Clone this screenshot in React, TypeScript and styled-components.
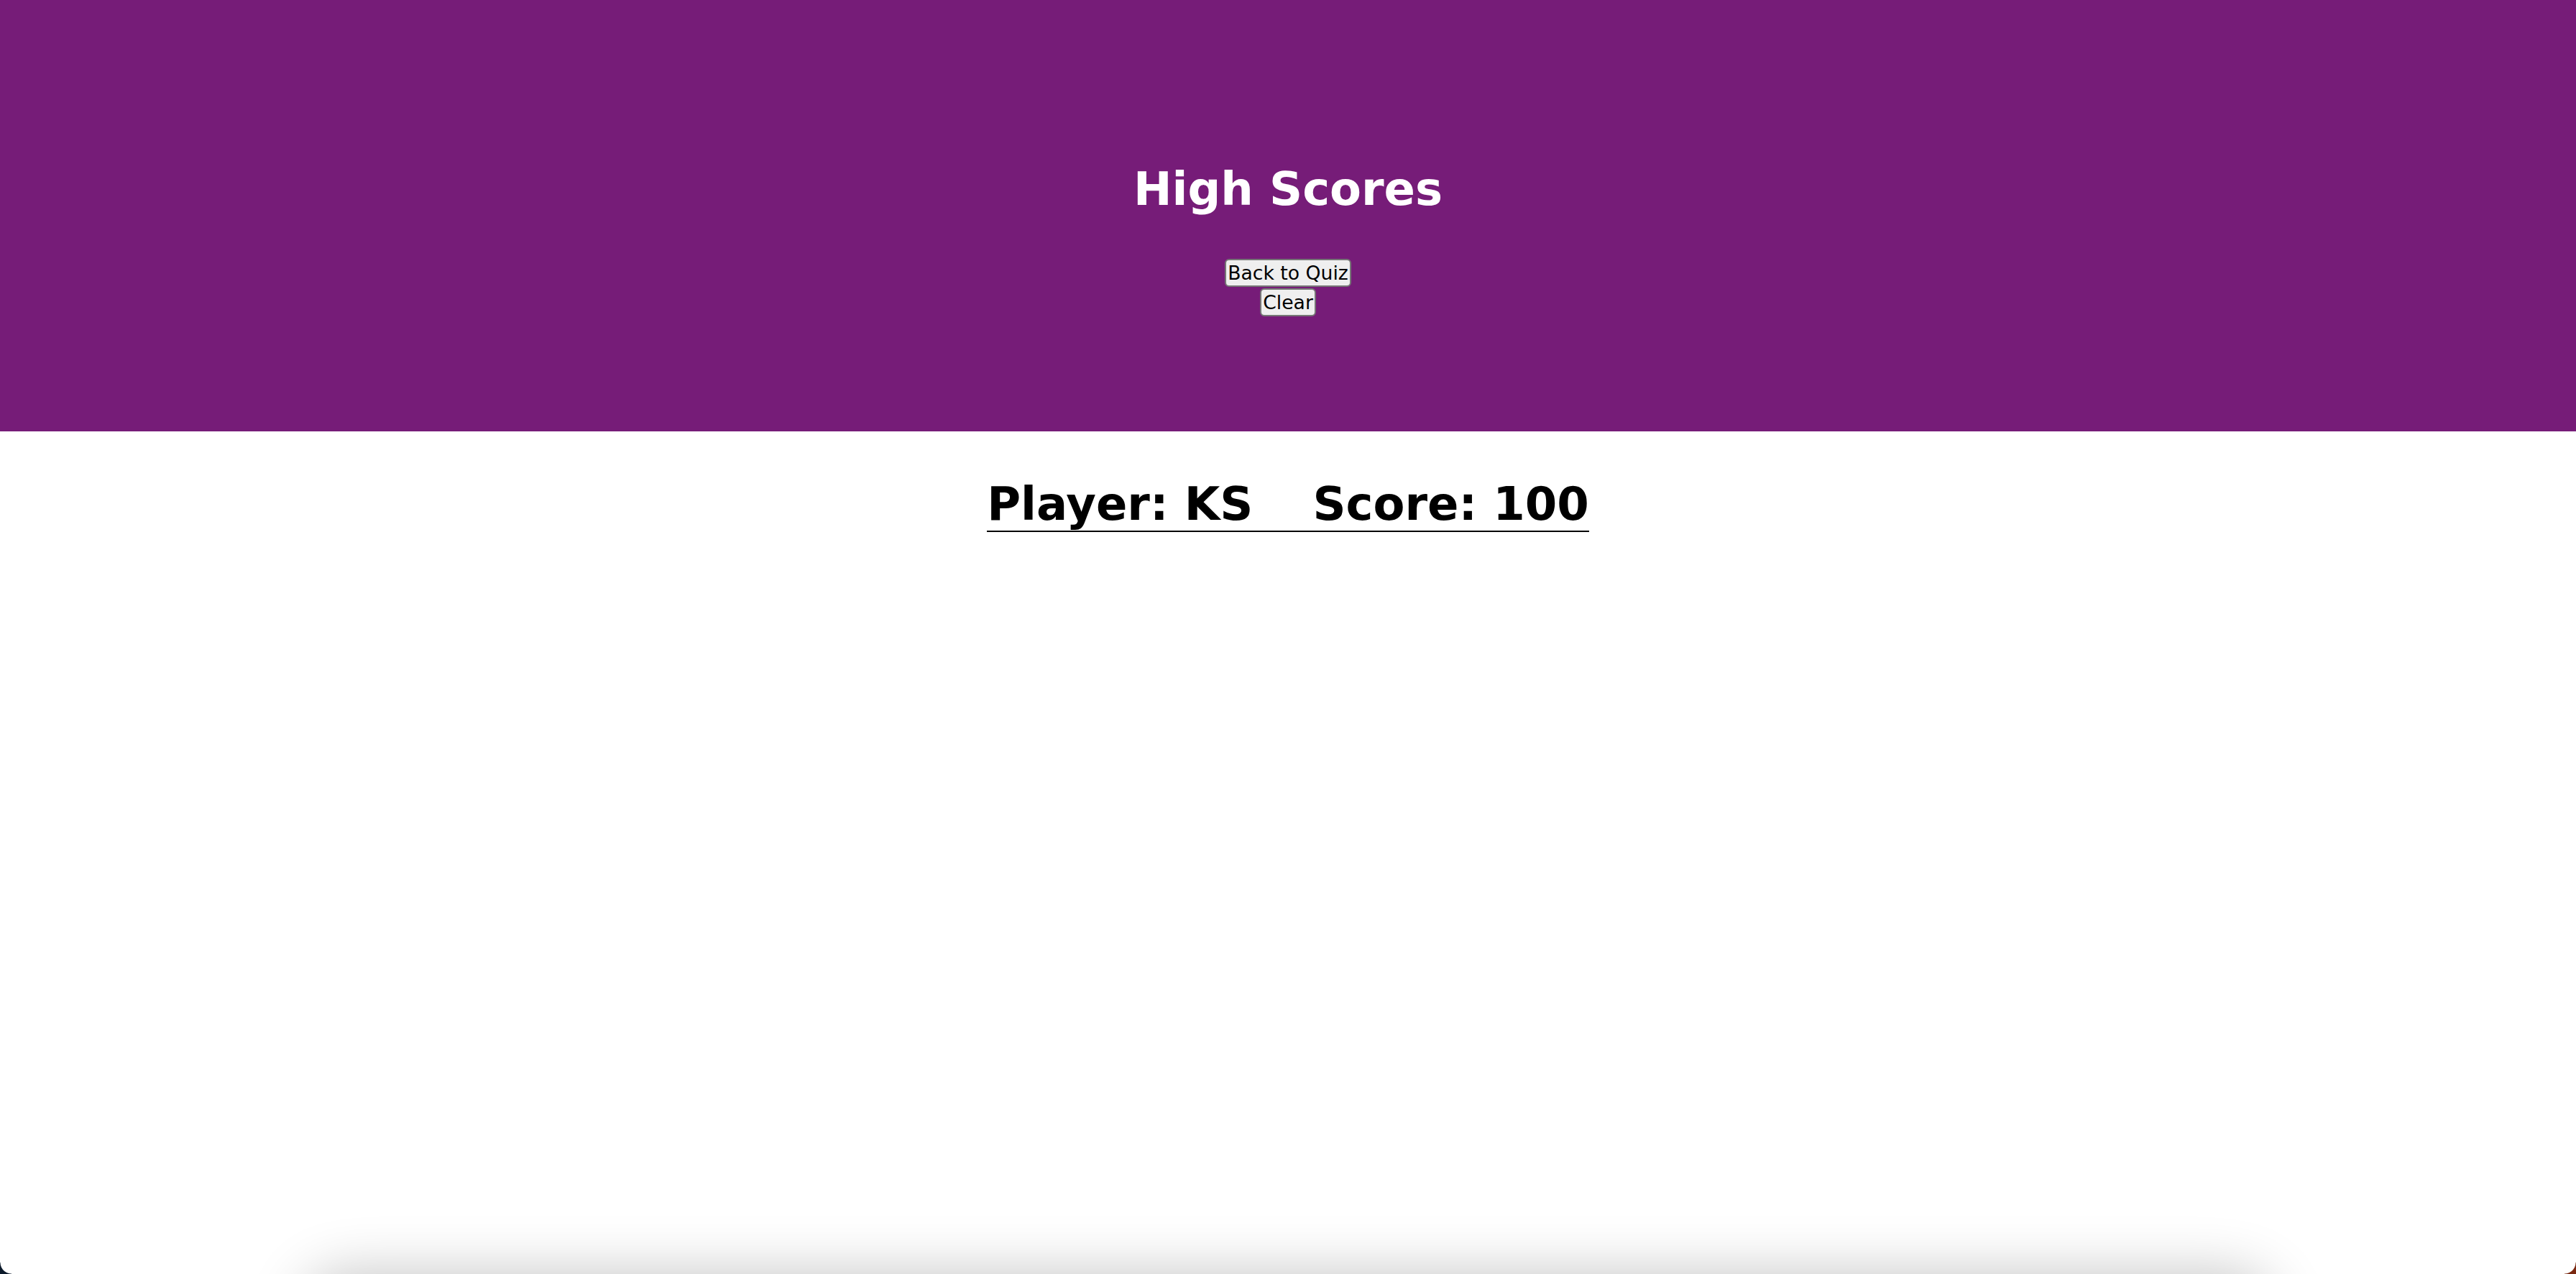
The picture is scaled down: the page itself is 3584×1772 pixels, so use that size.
import React from "react";
import styled, { createGlobalStyle } from "styled-components";

const GlobalStyle = createGlobalStyle`
  html, body {
    margin: 0;
    padding: 0;
    background: #ffffff;
    font-family: "DejaVu Sans", Verdana, sans-serif;
  }
`;

const scores = [{ player: "KS", score: 100 }];

const App = () => {
  return (
    <>
      <GlobalStyle />
      <Page>
        <Header>
          <Title>High Scores</Title>
          <Actions>
            <Button>Back to Quiz</Button>
            <Button>Clear</Button>
          </Actions>
        </Header>
        <Main>
          {scores.map((s) => (
            <ScoreRow key={s.player}>
              <ScoreLine>
                <span>Player: {s.player}</span>
                <ScoreValue>Score: {s.score}</ScoreValue>
              </ScoreLine>
            </ScoreRow>
          ))}
        </Main>
        <Shelf />
        <Corner $side="left" />
        <Corner $side="right" />
      </Page>
    </>
  );
};

export default App;

const Page = styled.div`
  position: relative;
  height: 100vh;
  overflow: hidden;
  display: flex;
  flex-direction: column;
`;

const Header = styled.header`
  flex: none;
  background: #761c78;
  height: 600px;
  box-sizing: border-box;
  padding-top: 226px;
  display: flex;
  flex-direction: column;
  align-items: center;
`;

const Title = styled.h1`
  margin: 0;
  color: #ffffff;
  font-size: 64px;
  font-weight: 700;
  line-height: 74px;
`;

const Actions = styled.div`
  margin-top: 60px;
  display: flex;
  flex-direction: column;
  align-items: center;
  gap: 2px;
`;

const Button = styled.button`
  font-family: "DejaVu Sans", Verdana, sans-serif;
  font-size: 26.67px;
  line-height: normal;
  color: #000000;
  background: #efefef;
  border: 2px solid #767676;
  border-radius: 6px;
  padding: 2px 2px;
  cursor: pointer;
`;

const Main = styled.main`
  flex: 1;
`;

const ScoreRow = styled.div`
  margin-top: 64px;
  text-align: center;
`;

const ScoreLine = styled.h2`
  display: inline-block;
  margin: 0;
  font-size: 64px;
  font-weight: 700;
  line-height: 74px;
  color: #000000;
  border-bottom: 2px solid #000000;
`;

const ScoreValue = styled.span`
  margin-left: 83px;
`;

/* footer sitting just below the fold; only its shadow shows */
const Shelf = styled.div`
  flex: none;
  height: 200px;
  margin: 0 auto -200px;
  width: 2740px;
  border-radius: 60px;
  background: #ffffff;
  box-shadow: 0 0 80px 0 rgba(0, 0, 0, 0.24);
`;

const Corner = styled.div<{ $side: "left" | "right" }>`
  position: absolute;
  bottom: 0;
  ${(p) => (p.$side === "left" ? "left: 0;" : "right: 0;")}
  width: 16px;
  height: 16px;
  background: ${(p) =>
    p.$side === "left"
      ? "radial-gradient(circle at top right, transparent 15px, #0c1a2b 16px)"
      : "radial-gradient(circle at top left, transparent 15px, #7a2810 16px)"};
`;
